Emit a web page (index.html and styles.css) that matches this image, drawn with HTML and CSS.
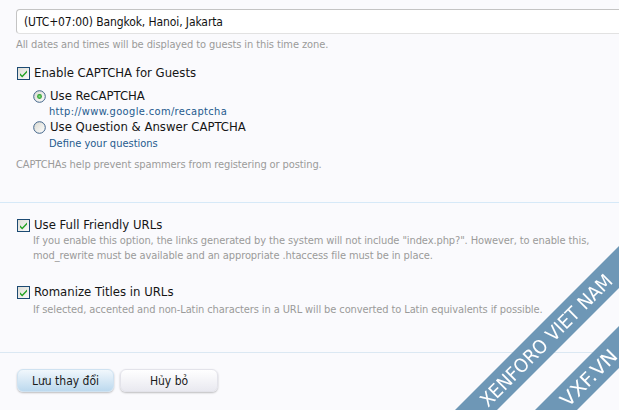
FILE: index.html
```html
<!DOCTYPE html>
<html>
<head>
<meta charset="utf-8">
<link rel="stylesheet" href="styles.css">
</head>
<body>
<div class="section first">
  <div class="select-ctrl">(UTC+07:00) Bangkok, Hanoi, Jakarta</div>
  <p class="hint">All dates and times will be displayed to guests in this time zone.</p>

  <div class="check-row">
    <svg class="box" width="13" height="13" viewBox="0 0 13 13"><defs><linearGradient id="cb" x1="0" y1="0" x2="1" y2="1"><stop offset="0" stop-color="#dcdcd4"/><stop offset="1" stop-color="#fbfbfb"/></linearGradient></defs><rect x="0.5" y="0.5" width="12" height="12" fill="url(#cb)" stroke="#1c4a73"/><path d="M3 6.2 L5.2 8.6 L10 3.4 L10 5.4 L5.2 10.6 L3 8.2 Z" fill="#21a121"/></svg>
    <span>Enable CAPTCHA for Guests</span>
  </div>
  <ul class="radios">
    <li>
      <div class="radio-row">
        <svg class="box" width="13" height="13" viewBox="0 0 13 13"><defs><linearGradient id="rb" x1="0" y1="0" x2="1" y2="1"><stop offset="0" stop-color="#d8d8d0"/><stop offset="1" stop-color="#ffffff"/></linearGradient><radialGradient id="rd"><stop offset="0" stop-color="#8fe08f"/><stop offset="1" stop-color="#1e9a1e"/></radialGradient></defs><circle cx="6.5" cy="6.5" r="5.8" fill="url(#rb)" stroke="#41648a"/><circle cx="6.5" cy="6.5" r="2.4" fill="url(#rd)"/></svg>
        <span>Use ReCAPTCHA</span>
      </div>
      <a class="sublink url" href="#">http://www.google.com/recaptcha</a>
    </li>
    <li>
      <div class="radio-row">
        <svg class="box" width="13" height="13" viewBox="0 0 13 13"><circle cx="6.5" cy="6.5" r="5.8" fill="url(#rb)" stroke="#41648a"/></svg>
        <span>Use Question &amp; Answer CAPTCHA</span>
      </div>
      <a class="sublink" href="#">Define your questions</a>
    </li>
  </ul>
  <p class="hint captcha-hint">CAPTCHAs help prevent spammers from registering or posting.</p>
</div>

<div class="section second">
  <div class="check-row">
    <svg class="box" width="13" height="13" viewBox="0 0 13 13"><rect x="0.5" y="0.5" width="12" height="12" fill="url(#cb)" stroke="#1c4a73"/><path d="M3 6.2 L5.2 8.6 L10 3.4 L10 5.4 L5.2 10.6 L3 8.2 Z" fill="#21a121"/></svg>
    <span>Use Full Friendly URLs</span>
  </div>
  <p class="hint indented">If you enable this option, the links generated by the system will not include "index.php?". However, to enable this, mod_rewrite must be available and an appropriate .htaccess file must be in place.</p>

  <div class="check-row spaced">
    <svg class="box" width="13" height="13" viewBox="0 0 13 13"><rect x="0.5" y="0.5" width="12" height="12" fill="url(#cb)" stroke="#1c4a73"/><path d="M3 6.2 L5.2 8.6 L10 3.4 L10 5.4 L5.2 10.6 L3 8.2 Z" fill="#21a121"/></svg>
    <span>Romanize Titles in URLs</span>
  </div>
  <p class="hint indented tight">If selected, accented and non-Latin characters in a URL will be converted to Latin equivalents if possible.</p>
</div>

<div class="section buttons">
  <button class="btn primary">Lưu thay đổi</button>
  <button class="btn">Hủy bỏ</button>
</div>

<svg class="ribbon" width="170" height="170" viewBox="449 240 170 170">
  <polygon points="619,246 619,288 497,410 455,410" fill="#6e97b6"/>
  <polygon points="619,326 619,368 577,410 535,410" fill="#6e97b6"/>
  <text class="ribbon-text" transform="translate(488,408) rotate(-45)" textLength="178" lengthAdjust="spacingAndGlyphs">XENFORO VIET NAM</text>
  <text class="ribbon-text" transform="translate(568,408) rotate(-45)" textLength="72" lengthAdjust="spacingAndGlyphs">VXF.VN</text>
</svg>
</body>
</html>
```

FILE: styles.css
```css
html, body {
  margin: 0;
  padding: 0;
  background: #fafafd;
  height: 100%;
  overflow: hidden;
}
body {
  font-family: "DejaVu Sans Condensed", "DejaVu Sans", sans-serif;
  color: #1a1a1a;
}
.section {
  padding-left: 16px;
}
.first {
  padding-top: 9px;
  padding-bottom: 30px;
}
.select-ctrl {
  box-sizing: border-box;
  height: 25px;
  border: 1px solid #c4c4c4;
  border-right: none;
  border-bottom-color: #e2e2e2;
  border-radius: 4px 0 0 4px;
  background: #fff;
  font-size: 12px;
  line-height: 24px;
  padding-left: 7px;
  letter-spacing: -0.1px;
  color: #111;
}
.hint {
  margin: 4px 0 0 0;
  font-size: 11px;
  line-height: 14px;
  color: #9a9a9a;
  letter-spacing: -0.1px;
}
.check-row, .radio-row {
  display: flex;
  align-items: center;
  font-size: 13px;
  line-height: 16px;
  color: #151515;
}
.check-row {
  margin-top: 13px;
  padding-left: 1px;
}
.check-row .box {
  margin-right: 4px;
  flex: none;
}
.radios {
  list-style: none;
  margin: 7px 0 0 0;
  padding: 0 0 0 17px;
}
.radio-row .box {
  margin-right: 4px;
  flex: none;
}
.sublink {
  display: block;
  margin-left: 16px;
  font-size: 11px;
  line-height: 15px;
  color: #1f5a8e;
  text-decoration: none;
}
.sublink.url {
  letter-spacing: 0.35px;
}
.radios li:nth-child(2) .sublink {
  margin-top: 1px;
}
.captcha-hint {
  margin-top: 7px;
}
.second {
  border-top: 1px solid #d6e9f8;
  padding-top: 14px;
  padding-bottom: 35px;
}
.second .check-row {
  margin-top: 0;
}
.second .check-row.spaced {
  margin-top: 21px;
}
.indented {
  margin: 0 0 0 17px;
  line-height: 15px;
  padding-right: 10px;
}
.indented.tight {
  margin-top: 2px;
}
.buttons {
  border-top: 1px solid #dbe8f3;
  padding-top: 16px;
  padding-left: 17px;
  display: flex;
  gap: 6px;
}
.btn {
  box-sizing: border-box;
  height: 23px;
  width: 98px;
  border: 1px solid #e3e3ea;
  border-radius: 6px;
  background: linear-gradient(#ffffff, #e9e9f0);
  box-shadow: 0 1px 2px rgba(0, 0, 0, 0.25);
  font-family: "DejaVu Sans Condensed", "DejaVu Sans", sans-serif;
  font-size: 12px;
  color: #1a1a1a;
  padding: 0;
}
.btn.primary {
  width: 97px;
  border-color: #cfe2f1;
  background: linear-gradient(#f1f7fc, #bcd9ee);
}
.ribbon {
  position: fixed;
  right: 0;
  bottom: 0;
  pointer-events: none;
}
.ribbon-text {
  fill: #ffffff;
  font-family: "DejaVu Sans Condensed", "DejaVu Sans", sans-serif;
  font-size: 19px;
}
```
